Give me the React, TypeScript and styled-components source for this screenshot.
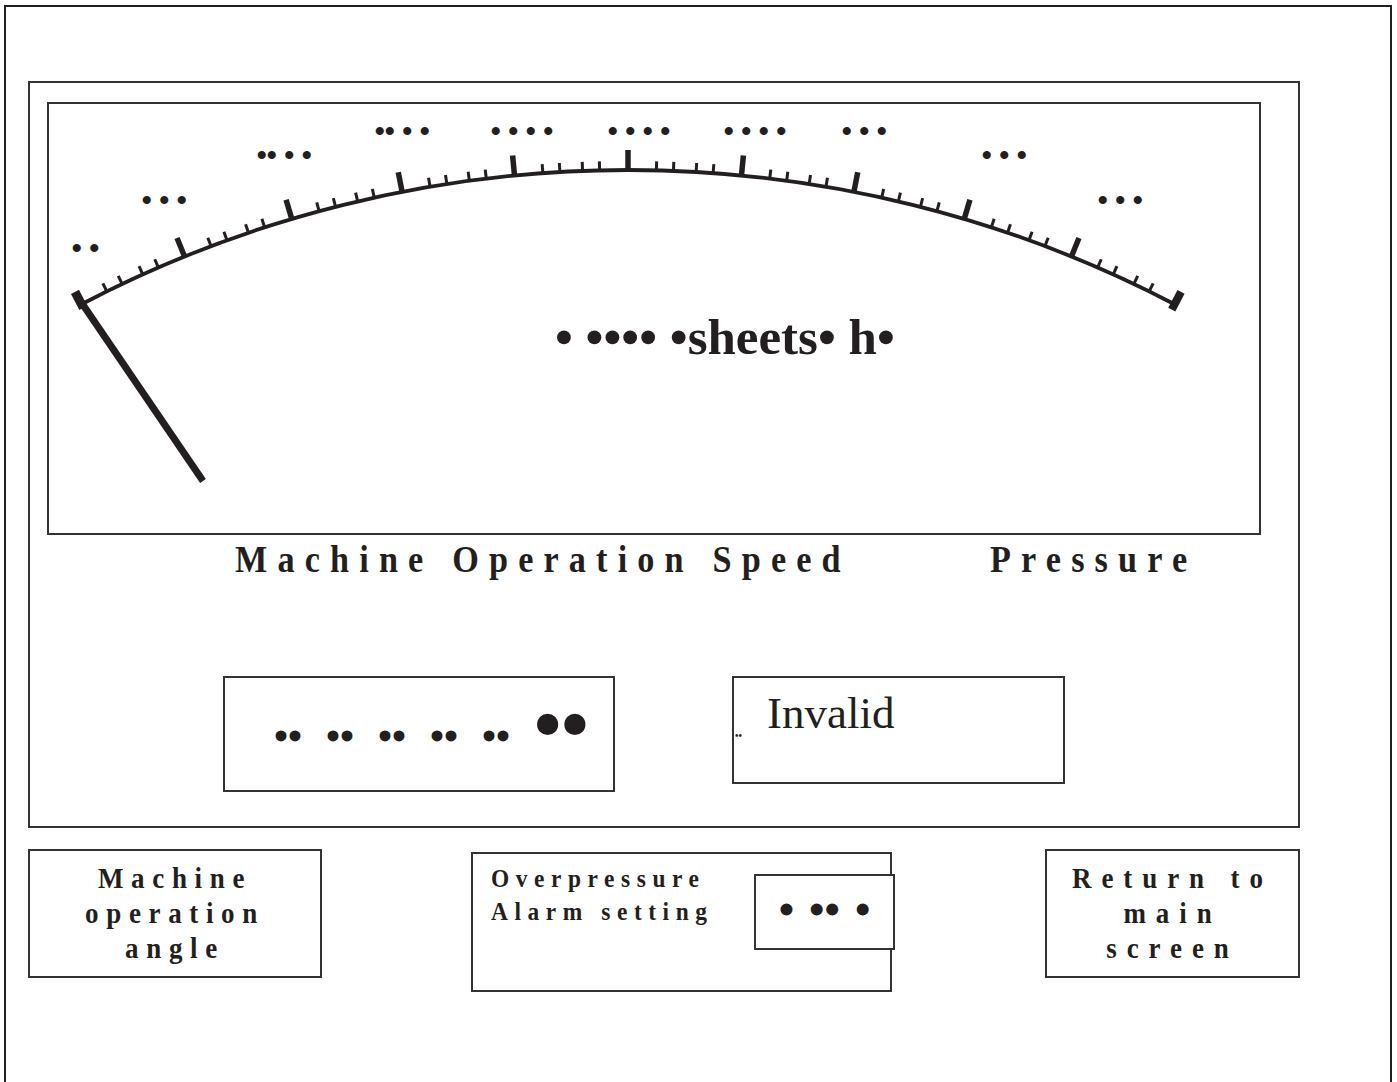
import React from "react";
import styled, { createGlobalStyle } from "styled-components";

const INK = "#231f20";
const LINE = "#333333";

const GlobalStyle = createGlobalStyle`
  html, body {
    margin: 0;
    padding: 0;
    background: #ffffff;
    overflow: hidden;
  }
  body {
    font-family: "Liberation Serif", "Times New Roman", serif;
    color: ${INK};
  }
`;

const Frame = styled.div`
  box-sizing: border-box;
  margin: 5px 0 0 4px;
  width: 1388px;
  height: 1077px;
  border: 2px solid ${INK};
  border-bottom: none;
  padding: 74px 0 0 22px;
`;

const Panel = styled.section`
  box-sizing: border-box;
  width: 1272px;
  height: 747px;
  border: 2px solid ${LINE};
  padding: 19px 0 0 17px;
  display: flex;
  flex-direction: column;
`;

const GaugeBox = styled.div`
  box-sizing: border-box;
  width: 1214px;
  height: 433px;
  border: 2px solid ${LINE};

  svg {
    display: block;
  }
`;

const LabelRow = styled.div`
  display: grid;
  grid-template-columns: 755px 1fr;
  padding-left: 188px;
  margin-top: 5px;
  height: 38px;
`;

const Caption = styled.span<{ $size: number; $track: number }>`
  display: inline-block;
  font-family: "Liberation Serif", "Times New Roman", serif;
  font-weight: bold;
  font-size: ${(p) => p.$size}px;
  line-height: ${(p) => p.$size}px;
  letter-spacing: ${(p) => p.$track}px;
  white-space: nowrap;
  transform: scaleX(0.9);
  transform-origin: left center;
`;

const DisplayRow = styled.div`
  display: flex;
  align-items: flex-start;
  gap: 117px;
  padding-left: 176px;
  margin-top: 98px;
`;

const ReadoutBox = styled.div`
  box-sizing: border-box;
  width: 392px;
  height: 116px;
  border: 2px solid ${LINE};
  display: flex;
  align-items: baseline;
  padding: 26px 0 0 49px;
  font-weight: bold;
`;

const Dots = styled.span<{ $size: number }>`
  font-size: ${(p) => p.$size}px;
  line-height: 40px;
  word-spacing: 14px;
  white-space: pre;
`;

const StatusBox = styled.div`
  box-sizing: border-box;
  width: 333px;
  height: 108px;
  border: 2px solid ${LINE};
  display: flex;
  align-items: flex-start;
  padding: 13px 0 0 1px;
`;

const TinyMark = styled.span`
  font-size: 10px;
  line-height: 10px;
  margin-top: 40px;
  font-weight: bold;
`;

const StatusText = styled.span`
  font-size: 45px;
  line-height: 45px;
  margin-left: 25px;
`;

const BottomRow = styled.div`
  width: 1272px;
  margin-top: 21px;
  display: flex;
  align-items: flex-start;
`;

const KeyButton = styled.div<{ $w: number }>`
  box-sizing: border-box;
  width: ${(p) => p.$w}px;
  height: 129px;
  border: 2px solid ${LINE};
  padding-top: 9px;
  text-align: center;

  &:last-child {
    margin-left: auto;
  }
`;

const KeyText = styled.div<{ $track: number }>`
  font-weight: bold;
  font-size: 30px;
  line-height: 35px;
  letter-spacing: ${(p) => p.$track}px;
  white-space: nowrap;
  transform: scaleX(0.9);
  transform-origin: center;
`;

const AlarmBox = styled.div`
  box-sizing: border-box;
  width: 421px;
  height: 140px;
  margin: 3px 0 0 149px;
  border: 2px solid ${LINE};
  display: flex;
  align-items: flex-start;
`;

const AlarmText = styled.div`
  padding: 8px 0 0 20px;
  font-weight: bold;
  font-size: 26px;
  line-height: 33px;
  letter-spacing: 7.3px;
  white-space: nowrap;
  transform: scaleX(0.9);
  transform-origin: left center;
`;

const SetpointBox = styled.div`
  box-sizing: border-box;
  width: 141px;
  height: 76px;
  margin: 20px -5px 0 auto;
  border: 2px solid ${LINE};
  background: #ffffff;
  display: flex;
  align-items: center;
  justify-content: center;
  padding-bottom: 6px;
  font-weight: bold;
  font-size: 44px;
  word-spacing: 4px;
  white-space: pre;
`;

// ---- gauge geometry (page coordinates) ----
const CX = 628;
const CY = 1349.7;
const R = 1179.7;
const SPAN = 27.6;
const STEP = (SPAN * 2) / 10;

const rad = (d: number) => (d * Math.PI) / 180;
const pt = (deg: number, r: number) => ({
  x: CX + r * Math.sin(rad(deg)),
  y: CY - r * Math.cos(rad(deg)),
});

type Tick = { deg: number; r0: number; r1: number; w: number };

const buildTicks = (): Tick[] => {
  const list: Tick[] = [];
  for (let i = 0; i <= 10; i++) {
    const deg = -SPAN + i * STEP;
    if (i === 0) list.push({ deg, r0: R - 4, r1: R + 14, w: 9 });
    else if (i === 10) list.push({ deg, r0: R - 6, r1: R + 14, w: 8 });
    else list.push({ deg, r0: R - 1, r1: R + 20, w: 5.5 });
    if (i < 10) {
      [0.25, 0.4, 0.6, 0.75].forEach((f) =>
        list.push({ deg: deg + f * STEP, r0: R - 1, r1: R + 9, w: 3 })
      );
    }
  }
  return list;
};

const ticks = buildTicks();

// scale marks: left edge of first dot, centre line, dot count, first pair tight
const scaleMarks = [
  { x: 73, y: 248, n: 2, tight: false },
  { x: 143, y: 200, n: 3, tight: false },
  { x: 258, y: 155, n: 4, tight: true },
  { x: 376, y: 131, n: 4, tight: true },
  { x: 492, y: 131, n: 4, tight: false },
  { x: 609, y: 131, n: 4, tight: false },
  { x: 725, y: 131, n: 4, tight: false },
  { x: 843, y: 131, n: 3, tight: false },
  { x: 983, y: 155, n: 3, tight: false },
  { x: 1099, y: 200, n: 3, tight: false },
];

const Gauge = () => {
  const a0 = pt(-SPAN, R);
  const a1 = pt(SPAN, R);
  return (
    <svg width={1210} height={429} viewBox="49 104 1210 429">
      <path
        d={`M ${a0.x} ${a0.y} A ${R} ${R} 0 0 1 ${a1.x} ${a1.y}`}
        fill="none"
        stroke={INK}
        strokeWidth={3.8}
      />
      {ticks.map((t, i) => {
        const p0 = pt(t.deg, t.r0);
        const p1 = pt(t.deg, t.r1);
        return (
          <line
            key={i}
            x1={p0.x}
            y1={p0.y}
            x2={p1.x}
            y2={p1.y}
            stroke={INK}
            strokeWidth={t.w}
          />
        );
      })}
      <line x1={77} y1={296} x2={203} y2={481} stroke={INK} strokeWidth={7} />
      <g
        fill={INK}
        fontFamily='"Liberation Serif", "Times New Roman", serif'
        fontWeight="bold"
        fontSize={30}
      >
        {scaleMarks.map((m, i) => (
          <text key={i} x={m.x - 1.5} y={m.y + 10} letterSpacing={7}>
            {m.tight ? (
              <>
                <tspan letterSpacing={-0.5}>•</tspan>
                {"•".repeat(m.n - 1)}
              </>
            ) : (
              "•".repeat(m.n)
            )}
          </text>
        ))}
        <text x={555} y={354} fontSize={51}>
          • •••• •sheets• h•
        </text>
      </g>
    </svg>
  );
};

const App = () => {
  return (
    <>
      <GlobalStyle />
      <Frame>
        <Panel>
          <GaugeBox>
            <Gauge />
          </GaugeBox>
          <LabelRow>
            <div>
              <Caption $size={38} $track={11.3}>
                Machine Operation Speed
              </Caption>
            </div>
            <div>
              <Caption $size={38} $track={11.3}>
                Pressure
              </Caption>
            </div>
          </LabelRow>
          <DisplayRow>
            <ReadoutBox>
              <Dots $size={40}>{"•• •• •• •• •• "}</Dots>
              <Dots $size={78}>••</Dots>
            </ReadoutBox>
            <StatusBox>
              <TinyMark>••</TinyMark>
              <StatusText>Invalid</StatusText>
            </StatusBox>
          </DisplayRow>
        </Panel>
        <BottomRow>
          <KeyButton $w={294}>
            <KeyText $track={8.5}>Machine</KeyText>
            <KeyText $track={8.5}>operation</KeyText>
            <KeyText $track={8.5}>angle</KeyText>
          </KeyButton>
          <AlarmBox>
            <AlarmText>
              <div>Overpressure</div>
              <div>Alarm setting</div>
            </AlarmText>
            <SetpointBox>• •• •</SetpointBox>
          </AlarmBox>
          <KeyButton $w={255}>
            <KeyText $track={11}>Return to</KeyText>
            <KeyText $track={11}>main</KeyText>
            <KeyText $track={11}>screen</KeyText>
          </KeyButton>
        </BottomRow>
      </Frame>
    </>
  );
};

export default App;
